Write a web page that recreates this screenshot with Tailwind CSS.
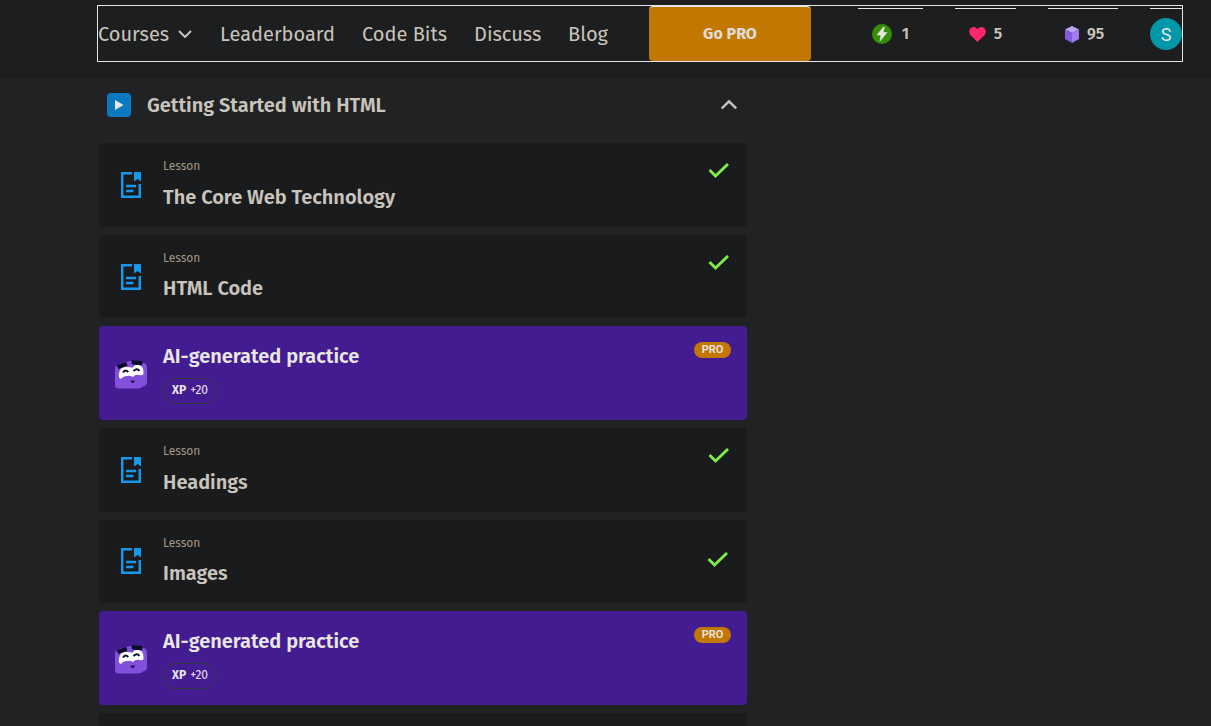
<!DOCTYPE html>
<html lang="en">
<head>
<meta charset="utf-8">
<meta name="viewport" content="width=device-width, initial-scale=1">
<title>Getting Started with HTML</title>
<script src="https://cdn.jsdelivr.net/npm/@tailwindcss/browser@4"></script>
</head>
<body class="h-screen overflow-hidden bg-[#202223] font-['Fira_Sans','Noto_Sans','Open_Sans',sans-serif] text-[#c8c3bc]">
<svg class="hidden" aria-hidden="true">
  <symbol id="lesson" viewBox="0 0 20 26">
    <path d="M11 1.2H1.2V24.8H18.8V12" fill="none" stroke="#1698ee" stroke-width="2.5"/>
    <path d="M13 0H20V9.500L16.500 7L13 9.500Z" fill="#1698ee"/>
    <path d="M5 14H15M5 19H12.500" stroke="#1698ee" stroke-width="2.500"/>
  </symbol>
  <symbol id="check" viewBox="0 0 22 16">
    <path d="M1.500 7L7.500 13L20 1" fill="none" stroke="#7eec4b" stroke-width="2.900"/>
  </symbol>
  <symbol id="mascot" viewBox="0 0 32 29">
    <path d="M3 5Q16-2 29 3Q32 4 32 8V22Q32 25 29 26Q26 28.500 22 28.500H4Q0 28.500 0 25V9Q0 6 3 5Z" fill="#8350dc"/>
    <path d="M4 14Q5 6 11 7Q16 7 17 8Q20 4 24 5Q29 6 28.500 14Q27 16 25 15Q20 14 18 17Q15 15 12 16Q8 16 6 19Q3 18 4 14Z" fill="#fff"/>
    <path d="M8 12.500Q10.500 8.500 13.200 12.200M18.500 11.200Q21.500 7.500 24.500 10.800" fill="none" stroke="#0d1030" stroke-width="2"/>
    <path d="M2.500 5.500L11 2.500L12 5.500L3.500 8.500ZM17 .8L27 1.500L26.800 4.800L17.200 4Z" fill="#090d27" stroke="#090d27" stroke-linejoin="round"/>
    <path d="M15 20.500Q17.500 21 20 20.300Q19 23.500 16.800 22.800Z" fill="#0d1030"/>
  </symbol>
</svg>

<header class="h-[78px] bg-[#1d1e1f] pt-[5px] pr-7 pl-[97px]">
  <div class="flex h-[57px] items-center justify-between border border-[#e8e6e3]">
    <nav class="flex h-full items-center gap-7 text-xl whitespace-nowrap" aria-label="Main">
      <button type="button" class="flex w-[94px] items-center justify-between">Courses
        <svg class="h-2 w-3.5" viewBox="0 0 14 8" fill="none" stroke="currentColor" stroke-width="2" aria-hidden="true"><path d="M1 1L7 7L13 1"/></svg>
      </button>
      <a href="#" class="w-[114px]">Leaderboard</a>
      <a href="#" class="w-[84px]">Code Bits</a>
      <a href="#" class="w-[66px]">Discuss</a>
      <a href="#" class="w-10">Blog</a>
      <a href="#" class="ml-[13px] flex h-full w-[162px] items-center justify-center rounded border-t border-[#e8e6e3] bg-[#c27800] text-base font-bold text-[#e0ddd8]">Go PRO</a>
    </nav>
    <div class="flex items-center gap-8 text-base font-semibold">
      <button type="button" class="flex h-[52px] w-[65px] items-center justify-center gap-2.5 border-t border-[#e8e6e3]" aria-label="Streak: 1">
        <svg class="size-5" viewBox="0 0 20 20" aria-hidden="true"><circle cx="10" cy="10" r="10" fill="#368f0b"/><path d="M11.500 3L5 11H9L8 17L15 8.500H11L12.500 3.500Z" fill="#e8e6e3" stroke="#e8e6e3" stroke-width=".6"/></svg>
        1
      </button>
      <button type="button" class="flex h-[52px] w-[61px] items-center justify-center gap-2 border-t border-[#e8e6e3]" aria-label="Hearts: 5">
        <svg class="h-[15px] w-[17px]" viewBox="0 0 17 15" aria-hidden="true"><path d="M8.500 15L1.400 8C-1 5 .3 .2 4.500 0Q7 0 8.500 2Q10 0 12.500 0C16.700 .2 18 5 15.600 8Z" fill="#ff2670"/></svg>
        5
      </button>
      <button type="button" class="flex h-[52px] w-[70px] items-center gap-2 border-t border-[#e8e6e3] pl-[17px]" aria-label="Bits: 95">
        <svg class="h-[17px] w-3.5" viewBox="0 0 14 17" aria-hidden="true"><path d="M7 0L14 3.500L7 7L0 3.500Z" fill="#bba6f3"/><path d="M0 3.500L7 7V17L0 13Z" fill="#8559df"/><path d="M14 3.500L7 7V17L14 13Z" fill="#a27bf2"/></svg>
        95
      </button>
      <button type="button" class="flex h-[52px] w-8 items-center border-t border-[#e8e6e3]" aria-label="Profile">
        <span class="flex size-8 items-center justify-center rounded-full bg-[#0097a9] font-['Roboto'] text-[18px] font-normal text-[#e8e6e3]">S</span>
      </button>
    </div>
  </div>
</header>

<main class="ml-[99px] max-w-[648px]">
  <h2>
    <button type="button" aria-expanded="true" class="flex h-[54px] w-full items-center pr-[10px] pl-2 text-left text-xl font-semibold">
      <svg class="mr-4 size-6" viewBox="0 0 24 24" aria-hidden="true"><rect width="24" height="24" rx="4" fill="#0b79bf"/><path d="M8 7L16.500 12L8 17Z" fill="#e8e6e3"/></svg>
      <span class="flex-1">Getting Started with HTML</span>
      <svg class="h-2.5 w-4" viewBox="0 0 16 10" fill="none" stroke="currentColor" stroke-width="2.400" aria-hidden="true"><path d="M.8 8.500L8 1.300L15.200 8.500"/></svg>
    </button>
  </h2>

  <ul class="mt-[11px] flex flex-col gap-2">
    <li><a href="#" class="flex h-[84px] rounded bg-[#1a1b1c] pr-[17px] pl-[22px]">
      <svg class="mr-[22px] h-[26px] w-5 self-center" role="img" aria-label="Lesson"><use href="#lesson"/></svg>
      <span class="flex flex-1 flex-col pt-3.5"><span class="text-xs leading-[18px] text-[#a39786]">Lesson</span><span class="pt-2 text-xl leading-7 font-semibold">The Core Web Technology</span></span>
      <svg class="mt-5 h-4 w-[22px]" role="img" aria-label="Completed"><use href="#check"/></svg>
    </a></li>
    <li><a href="#" class="flex h-[83px] rounded bg-[#1a1b1c] pr-[17px] pl-[22px]">
      <svg class="mr-[22px] h-[26px] w-5 self-center" role="img" aria-label="Lesson"><use href="#lesson"/></svg>
      <span class="flex flex-1 flex-col pt-3.5"><span class="text-xs leading-[18px] text-[#a39786]">Lesson</span><span class="pt-[7px] text-xl leading-7 font-semibold">HTML Code</span></span>
      <svg class="mt-5 h-4 w-[22px]" role="img" aria-label="Completed"><use href="#check"/></svg>
    </a></li>
    <li><a href="#" class="flex h-[94px] rounded bg-[#431c92] px-4 text-[#e8e6e3]">
      <svg class="mr-4 mt-[34px] h-[29px] w-8" aria-hidden="true"><use href="#mascot"/></svg>
      <span class="flex flex-1 flex-col items-start pt-4"><span class="text-xl leading-7 font-semibold">AI-generated practice</span><span class="mt-2 flex h-[26px] w-[54px] items-center justify-center gap-1 rounded-full border border-[#363a3c] pb-0.5 text-xs"><b>XP</b><span>+20</span></span></span>
      <span class="mt-4 flex h-4 w-[37px] items-center justify-center rounded-full bg-[#c27800] font-['Roboto'] text-[11px] font-semibold">PRO</span>
    </a></li>
    <li><a href="#" class="flex h-[84px] rounded bg-[#1a1b1c] pr-[17px] pl-[22px]">
      <svg class="mr-[22px] h-[26px] w-5 self-center" role="img" aria-label="Lesson"><use href="#lesson"/></svg>
      <span class="flex flex-1 flex-col pt-3.5"><span class="text-xs leading-[18px] text-[#a39786]">Lesson</span><span class="pt-2 text-xl leading-7 font-semibold">Headings</span></span>
      <svg class="mt-5 h-4 w-[22px]" role="img" aria-label="Completed"><use href="#check"/></svg>
    </a></li>
    <li><a href="#" class="flex h-[83px] rounded bg-[#1a1b1c] pr-[18px] pl-[22px]">
      <svg class="mr-[22px] mt-7 h-[26px] w-5" role="img" aria-label="Lesson"><use href="#lesson"/></svg>
      <span class="flex flex-1 flex-col pt-3.5"><span class="text-xs leading-[18px] text-[#a39786]">Lesson</span><span class="pt-[7px] text-xl leading-7 font-semibold">Images</span></span>
      <svg class="mt-8 h-4 w-[22px]" role="img" aria-label="Completed"><use href="#check"/></svg>
    </a></li>
    <li><a href="#" class="flex h-[94px] rounded bg-[#431c92] px-4 text-[#e8e6e3]">
      <svg class="mr-4 mt-[34px] h-[29px] w-8" aria-hidden="true"><use href="#mascot"/></svg>
      <span class="flex flex-1 flex-col items-start pt-4"><span class="text-xl leading-7 font-semibold">AI-generated practice</span><span class="mt-2 flex h-[26px] w-[54px] items-center justify-center gap-1 rounded-full border border-[#363a3c] pb-0.5 text-xs"><b>XP</b><span>+20</span></span></span>
      <span class="mt-4 flex h-4 w-[37px] items-center justify-center rounded-full bg-[#c27800] font-['Roboto'] text-[11px] font-semibold">PRO</span>
    </a></li>
    <li class="h-[84px] rounded bg-[#1a1b1c]"></li>
  </ul>
</main>
</body>
</html>
